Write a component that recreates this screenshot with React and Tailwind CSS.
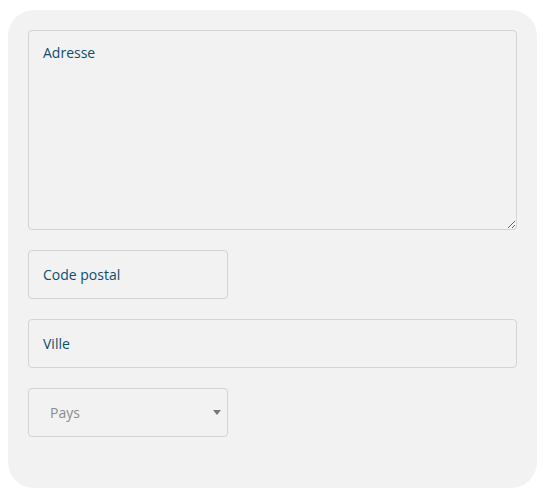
import { useState } from 'react';

const fieldClass =
  'h-[49px] rounded border border-[#d4d4d4] bg-[#f2f2f2] px-[14px] text-[14px] text-[#0e4d6e] placeholder:text-[#0e4d6e] outline-none';

const App = () => {
  const [country, setCountry] = useState('');

  return (
    <div className="min-h-screen bg-white pt-[10px] pl-2 pr-[6px] pb-2" style={{ fontFamily: '"Open Sans", "Noto Sans", sans-serif' }}>
      <form className="flex flex-col gap-5 rounded-[26px] bg-[#f2f2f2] px-5 pt-5 pb-[51px]">
        <textarea
          placeholder="Adresse"
          className="h-[200px] w-full resize-y rounded border border-[#d4d4d4] bg-[#f2f2f2] px-[14px] py-[11px] text-[14px] text-[#0e4d6e] placeholder:text-[#0e4d6e] outline-none"
        />

        <input placeholder="Code postal" className={`${fieldClass} w-[200px]`} />

        <input placeholder="Ville" className={`${fieldClass} w-full`} />

        <div className="relative w-[200px]">
          <select
            value={country}
            onChange={(e) => setCountry(e.target.value)}
            className="h-[49px] w-full appearance-none rounded border border-[#d4d4d4] bg-[#f2f2f2] pl-[21px] text-[14px] text-[#8c8c8c] outline-none"
          >
            <option value="">Pays</option>
            <option value="fr">France</option>
            <option value="be">Belgique</option>
            <option value="ch">Suisse</option>
          </select>
          {/* little caret */}
          <span className="pointer-events-none absolute right-[7px] top-[22px] h-0 w-0 border-x-[4px] border-t-[5px] border-x-transparent border-t-[#777]" />
        </div>
      </form>
    </div>
  );
};

export default App;
